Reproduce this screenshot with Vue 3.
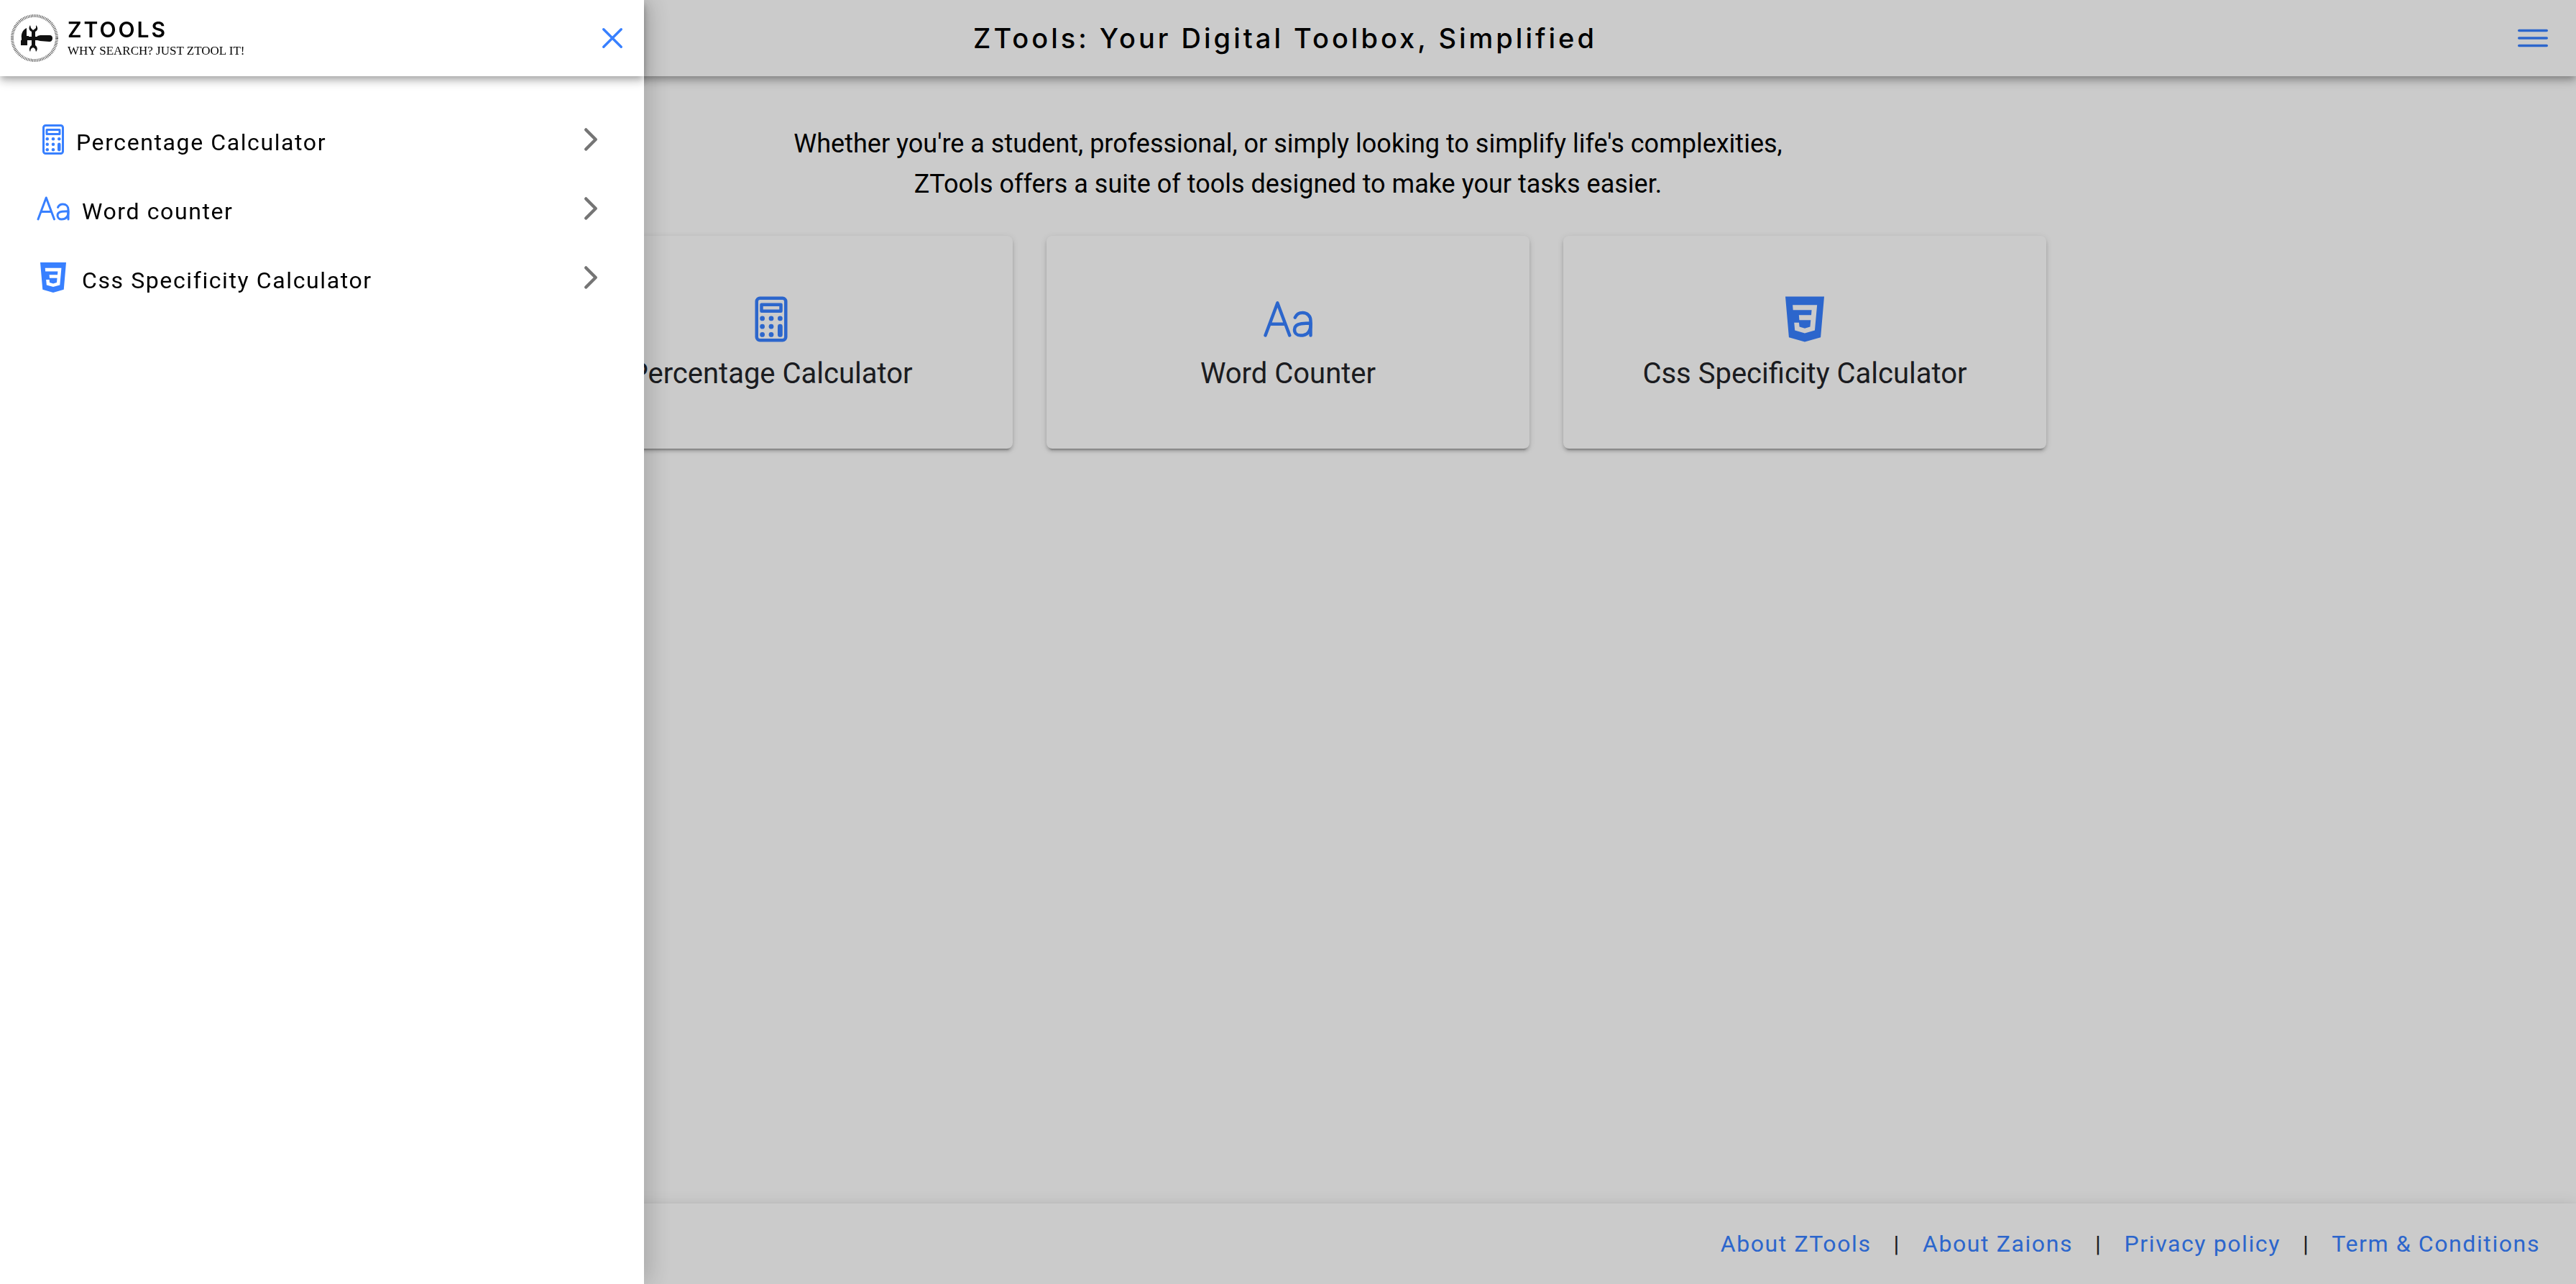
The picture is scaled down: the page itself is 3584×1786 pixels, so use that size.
<script setup>
import { ref } from 'vue'

const menuOpen = ref(true)

const menuItems = [
  { label: 'Percentage Calculator', icon: 'calculator' },
  { label: 'Word counter', icon: 'text' },
  { label: 'Css Specificity Calculator', icon: 'css' }
]

const tools = [
  { label: 'Percentage Calculator', icon: 'calculator' },
  { label: 'Word Counter', icon: 'text' },
  { label: 'Css Specificity Calculator', icon: 'css' }
]

const footerLinks = ['About ZTools', 'About Zaions', 'Privacy policy', 'Term & Conditions']
</script>

<template>
  <svg class="sprite" aria-hidden="true">
    <symbol id="calculator" viewBox="0 0 512 512">
      <g fill="none" stroke="currentColor" stroke-width="32" stroke-linejoin="round">
        <rect x="112" y="48" width="288" height="416" rx="32" />
        <rect x="160" y="112" width="192" height="64" />
      </g>
      <g fill="currentColor">
        <circle cx="168" cy="248" r="24" />
        <circle cx="256" cy="248" r="24" />
        <circle cx="344" cy="248" r="24" />
        <circle cx="168" cy="328" r="24" />
        <circle cx="256" cy="328" r="24" />
        <circle cx="168" cy="408" r="24" />
        <circle cx="256" cy="408" r="24" />
        <rect x="320" y="304" width="48" height="128" rx="24" />
      </g>
    </symbol>
    <symbol id="text" viewBox="0 0 512 512">
      <g fill="none" stroke="currentColor" stroke-width="32" stroke-linecap="round" stroke-linejoin="round">
        <path d="M32 415.5l120-320 120 320M230 303.5H74M326 239.5c12.19-28.69 41-48 74-48 46 0 80 32 80 80v144" />
        <path d="M320 358.5c0 36 26.86 58 60 58 54 0 100-27 100-106v-15c-20 0-58 1-92 5-32.77 3.86-68 19-68 58z" />
      </g>
    </symbol>
    <symbol id="css" viewBox="0 0 512 512">
      <path
        fill="currentColor"
        fill-rule="evenodd"
        d="M64 32l35 403.22L255.77 480 413 435.15 448 32zM136 115h242L355 367l-99 28-98-28-7-78h48l4 42 53 15 53-15 6-66H202l-4-50h122l4-50H140z"
      />
    </symbol>
  </svg>

  <div class="page">
    <header class="topbar">
      <h1 class="topbar-title">ZTools: Your Digital Toolbox, Simplified</h1>
      <button class="icon-button" type="button" aria-label="Open menu" @click="menuOpen = true">
        <svg viewBox="0 0 512 512">
          <path d="M80 160h352M80 256h352M80 352h352" fill="none" stroke="currentColor" stroke-width="32" stroke-linecap="round" />
        </svg>
      </button>
    </header>

    <main class="content">
      <p class="intro">
        Whether you're a student, professional, or simply looking to simplify life's complexities,<br />
        ZTools offers a suite of tools designed to make your tasks easier.
      </p>
      <div class="cards">
        <a v-for="tool in tools" :key="tool.label" href="#" class="card">
          <svg class="card-icon"><use :href="'#' + tool.icon" /></svg>
          <span class="card-title">{{ tool.label }}</span>
        </a>
      </div>
    </main>

    <footer class="footer">
      <template v-for="(link, i) in footerLinks" :key="link">
        <span v-if="i > 0" class="separator">|</span>
        <a href="#" class="footer-link">{{ link }}</a>
      </template>
    </footer>
  </div>

  <div v-if="menuOpen" class="backdrop" @click="menuOpen = false"></div>

  <aside v-if="menuOpen" class="drawer">
    <div class="drawer-header">
      <svg class="logo" viewBox="0 0 68 68" aria-hidden="true">
        <circle cx="34" cy="34" r="31" fill="none" stroke="#444" stroke-width="4" stroke-dasharray="0.9 1.3" />
        <g fill="#111">
          <path d="M23 20v11h3v6h-2v7h-9v-7h1v-3c-1-6 2-12 7-14z" />
          <path d="M24 32h14v5H24z" />
          <path d="M38 31l4-1h13c3 0 4 2 4 4s-1 5-4 5l-13-1-4-1z" />
          <path d="M28 16c-3 4-1 8 2 9v19c-3 2-4 6-2 9l1-4 3-2 3 2 1 4c3-3 2-7-1-9V25c3-1 5-5 1-9v4l-4 3-3-3z" />
        </g>
      </svg>
      <div class="brand">
        <span class="brand-name">ZTOOLS</span>
        <span class="brand-tagline">WHY SEARCH? JUST ZTOOL IT!</span>
      </div>
      <button class="icon-button" type="button" aria-label="Close menu" @click="menuOpen = false">
        <svg viewBox="0 0 512 512">
          <path d="M368 368L144 144M368 144L144 368" fill="none" stroke="currentColor" stroke-width="32" stroke-linecap="round" />
        </svg>
      </button>
    </div>
    <nav class="menu">
      <a v-for="item in menuItems" :key="item.label" href="#" class="menu-item" :class="'menu-item-' + item.icon">
        <svg class="menu-icon"><use :href="'#' + item.icon" /></svg>
        <span class="menu-label">{{ item.label }}</span>
        <svg class="chevron" viewBox="0 0 512 512">
          <path d="M184 112l144 144-144 144" fill="none" stroke="currentColor" stroke-width="48" stroke-linecap="round" stroke-linejoin="round" />
        </svg>
      </a>
    </nav>
  </aside>
</template>

<style>
body {
  margin: 0;
  background: #fefefe;
}
</style>

<style scoped>
* {
  box-sizing: border-box;
}

.sprite {
  position: absolute;
  width: 0;
  height: 0;
}

.page {
  display: flex;
  flex-direction: column;
  min-height: 100vh;
  font-family: Roboto, sans-serif;
  color: #000;
}

.topbar,
.drawer-header,
.footer {
  background: #fefefe;
  box-shadow:
    0 4px 8px -2px rgba(0, 0, 0, 0.2),
    0 8px 10px 0 rgba(0, 0, 0, 0.14),
    0 2px 20px 0 rgba(0, 0, 0, 0.12);
}

.topbar {
  display: flex;
  align-items: center;
  height: 106px;
  padding: 0 32px 0 24px;
}

.topbar-title {
  flex: 1;
  margin: 0;
  padding-left: 56px;
  font-family: Inter, Roboto, sans-serif;
  font-size: 38px;
  font-weight: 500;
  line-height: 48px;
  letter-spacing: 4px;
  text-align: center;
}

.icon-button {
  width: 56px;
  height: 56px;
  padding: 0;
  border: 0;
  background: none;
  color: #3880ff;
  cursor: pointer;
}

.icon-button svg {
  display: block;
  width: 56px;
  height: 56px;
}

.content {
  flex: 1;
  padding: 66px 32px;
}

.intro {
  margin: 0;
  font-size: 36px;
  line-height: 56px;
  text-align: center;
}

.cards {
  display: flex;
  gap: 47px;
  max-width: 2110px;
  margin: 44px auto 0;
}

.card {
  display: flex;
  flex: 1;
  flex-direction: column;
  align-items: center;
  gap: 16px;
  padding: 80px 32px;
  border-radius: 8px;
  background: #fefefe;
  color: #222428;
  text-decoration: none;
  box-shadow:
    0 6px 2px -4px rgba(0, 0, 0, 0.2),
    0 4px 4px 0 rgba(0, 0, 0, 0.14),
    0 2px 10px 0 rgba(0, 0, 0, 0.12);
}

.card-icon {
  width: 72px;
  height: 72px;
  color: #3880ff;
}

.card-title {
  font-size: 40px;
  line-height: 48px;
}

.footer {
  display: flex;
  align-items: center;
  justify-content: flex-end;
  gap: 31px;
  height: 112px;
  padding: 0 50px;
  font-size: 32px;
  line-height: 40px;
  letter-spacing: 0.05em;
}

.footer-link {
  color: #3880ff;
  text-decoration: none;
}

.separator {
  color: #222428;
}

.backdrop {
  position: fixed;
  inset: 0;
  background: rgba(0, 0, 0, 0.2);
}

.drawer {
  position: fixed;
  top: 0;
  bottom: 0;
  left: 0;
  width: 25%;
  background: #fff;
  font-family: Roboto, sans-serif;
  color: #000;
  box-shadow: 8px 0 32px rgba(0, 0, 0, 0.18);
}

.drawer-header {
  display: flex;
  align-items: center;
  height: 106px;
  padding: 0 16px 0 14px;
  background: #fff;
}

.logo {
  width: 68px;
  height: 68px;
}

.brand {
  display: flex;
  flex: 1;
  flex-direction: column;
  padding: 0 0 0 12px;
}

.brand-name {
  font-family: Inter, Roboto, sans-serif;
  font-size: 30px;
  font-weight: 600;
  line-height: 36px;
  letter-spacing: 3px;
}

.brand-tagline {
  font-family: "Liberation Serif", serif;
  font-size: 17px;
  line-height: 24px;
}

.menu {
  padding: 40px 50px;
}

.menu-item {
  display: flex;
  align-items: center;
  height: 96px;
  color: #000;
  text-decoration: none;
}

.menu-icon {
  width: 48px;
  height: 48px;
  color: #3880ff;
}

.menu-label {
  flex: 1;
  padding: 8px 0 0 16px;
  font-size: 32px;
  line-height: 40px;
  letter-spacing: 0.05em;
}

.menu-item-calculator .menu-label {
  padding-left: 8px;
}

.chevron {
  width: 48px;
  height: 48px;
  color: #757575;
}
</style>
